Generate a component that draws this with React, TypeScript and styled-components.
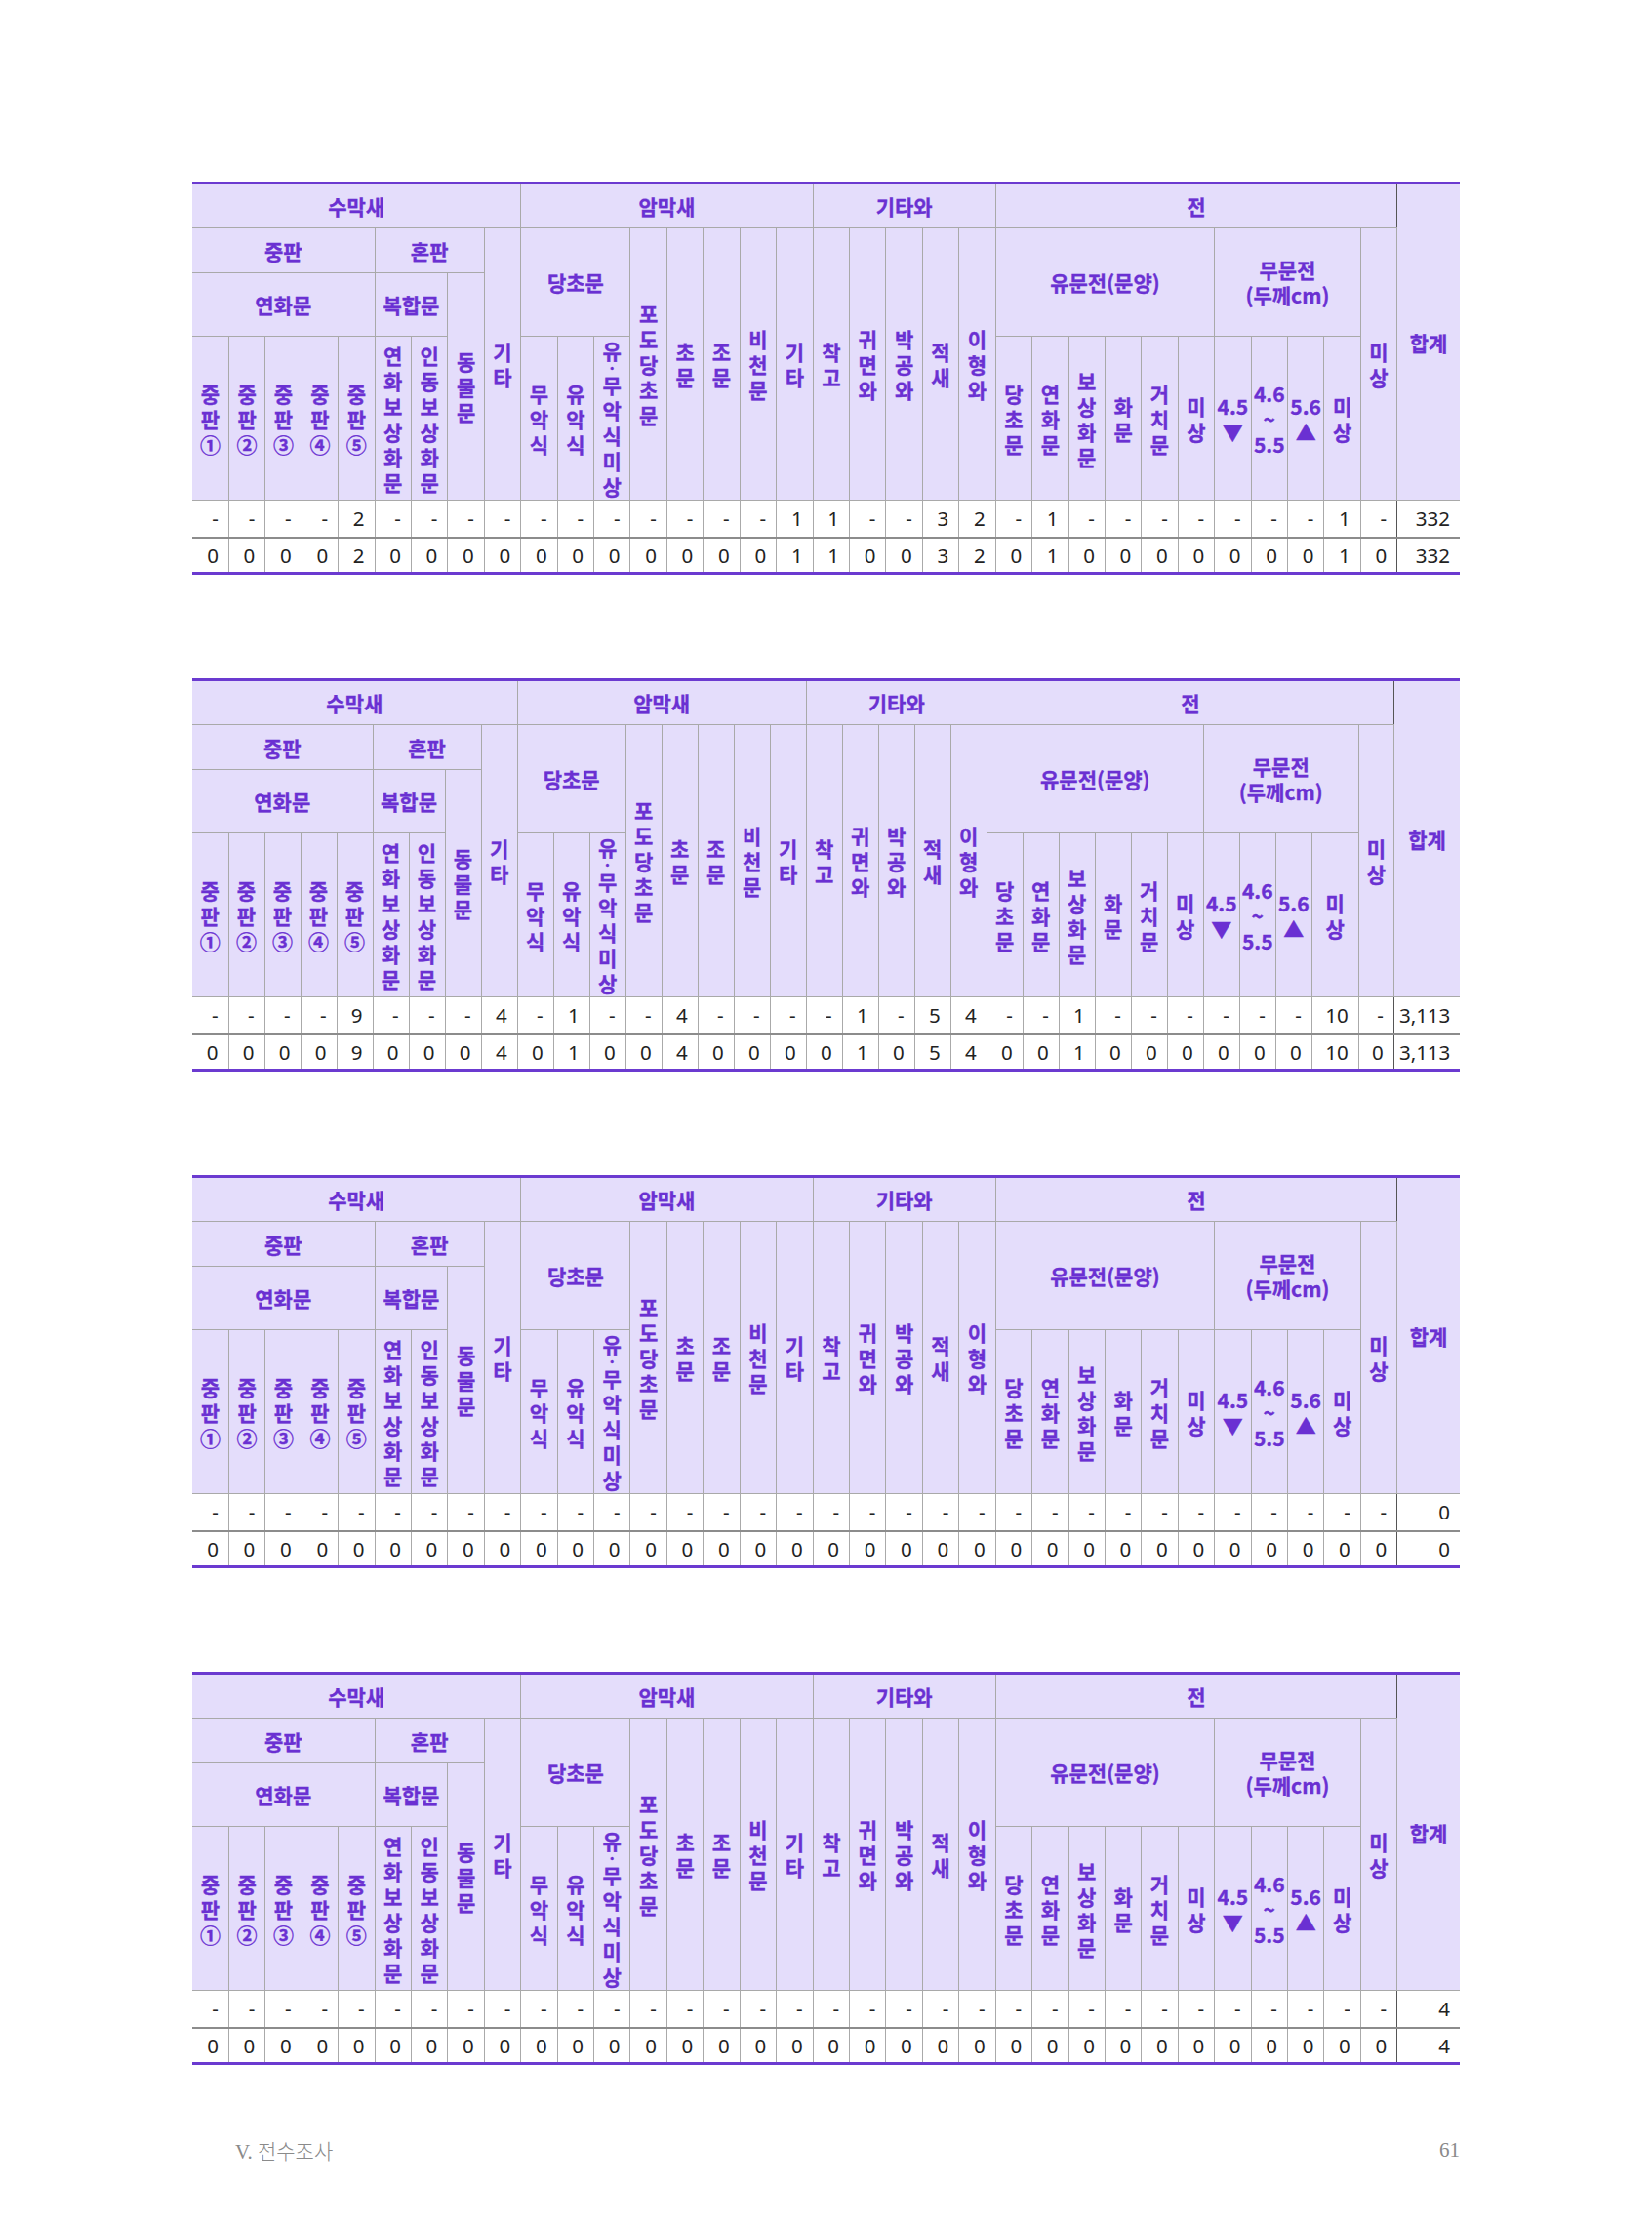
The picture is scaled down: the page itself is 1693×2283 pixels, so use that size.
import React from 'react';
import styled, { createGlobalStyle, css } from 'styled-components';

const GlobalStyle = createGlobalStyle`
  html, body { margin: 0; padding: 0; background: #ffffff; }
  #root { width: 1693px; }
`;

const Page = styled.div`
  width: 1693px;
  height: 2283px;
  box-sizing: border-box;
  padding: 186px 197px 0 197px;
  display: flex;
  flex-direction: column;
`;

const TableStack = styled.div`
  display: flex;
  flex-direction: column;
  gap: 106px;
`;

const Table = styled.table`
  border-collapse: collapse;
  table-layout: fixed;
  width: 1299px;
  border-top: 3px solid #6b3ad0;
  border-bottom: 3px solid #6b3ad0;
  border-left: hidden;
  border-right: hidden;
`;

const Col = styled.col<{ $w: number }>`
  width: ${(p) => p.$w}px;
`;

const HeadRow = styled.tr<{ $h: number }>`
  height: ${(p) => p.$h}px;
`;

const Th = styled.th<{ $edge?: boolean }>`
  background: #e4ddfb;
  color: #6a30d2;
  font-family: "Noto Sans CJK KR", "Noto Sans", sans-serif;
  font-weight: 700;
  font-size: 21px;
  line-height: 26px;
  -webkit-text-stroke: 0.35px #6a30d2;
  text-align: center;
  vertical-align: middle;
  padding: 0;
  border: 1px solid #a9a9a9;
  white-space: nowrap;
  ${(p) =>
    p.$edge &&
    css`
      border-right-color: #555555;
    `}
`;

const DataRow = styled.tr<{ $h: number; $sep?: boolean }>`
  height: ${(p) => p.$h}px;
  ${(p) =>
    p.$sep &&
    css`
      & > td {
        border-bottom: 2px solid #8c8c8c;
      }
    `}
`;

const Td = styled.td<{ $edge?: boolean }>`
  font-family: "Noto Sans", "Noto Sans CJK KR", sans-serif;
  font-size: 20.5px;
  color: #222222;
  text-align: right;
  vertical-align: middle;
  padding: 0 10px 0 0;
  border: 1px solid #aaaaaa;
  white-space: nowrap;
  ${(p) =>
    p.$edge &&
    css`
      border-right-color: #555555;
    `}
`;

const Stack = styled.span`
  display: inline-flex;
  flex-direction: column;
  align-items: center;
`;

const Ln = styled.span<{ $small?: boolean }>`
  display: block;
  height: ${(p) => (p.$small ? 9 : 26)}px;
  line-height: ${(p) => (p.$small ? 9 : 26)}px;
  ${(p) =>
    p.$small &&
    css`
      font-size: 16px;
    `}
`;

const Footer = styled.footer`
  margin-top: 72px;
  padding-left: 44px;
  display: flex;
  justify-content: space-between;
  align-items: center;
  font-family: "Liberation Serif", "Noto Sans CJK KR", serif;
  font-weight: 300;
  font-size: 21px;
  color: #8a8a8a;
`;

const V: React.FC<{ lines: string[] }> = ({ lines }) => (
  <Stack>
    {lines.map((l, i) => (
      <Ln key={i} $small={l === '·'}>
        {l}
      </Ln>
    ))}
  </Stack>
);

const Header: React.FC = () => (
  <thead>
    <HeadRow $h={46}>
      <Th colSpan={9}>수막새</Th>
      <Th colSpan={8}>암막새</Th>
      <Th colSpan={5}>기타와</Th>
      <Th colSpan={11} $edge>
        전
      </Th>
      <Th rowSpan={4}>합계</Th>
    </HeadRow>
    <HeadRow $h={46}>
      <Th colSpan={5}>중판</Th>
      <Th colSpan={3}>혼판</Th>
      <Th rowSpan={3}>
        <V lines={['기', '타']} />
      </Th>
      <Th colSpan={3} rowSpan={2}>
        당초문
      </Th>
      <Th rowSpan={3}>
        <V lines={['포', '도', '당', '초', '문']} />
      </Th>
      <Th rowSpan={3}>
        <V lines={['초', '문']} />
      </Th>
      <Th rowSpan={3}>
        <V lines={['조', '문']} />
      </Th>
      <Th rowSpan={3}>
        <V lines={['비', '천', '문']} />
      </Th>
      <Th rowSpan={3}>
        <V lines={['기', '타']} />
      </Th>
      <Th rowSpan={3}>
        <V lines={['착', '고']} />
      </Th>
      <Th rowSpan={3}>
        <V lines={['귀', '면', '와']} />
      </Th>
      <Th rowSpan={3}>
        <V lines={['박', '공', '와']} />
      </Th>
      <Th rowSpan={3}>
        <V lines={['적', '새']} />
      </Th>
      <Th rowSpan={3}>
        <V lines={['이', '형', '와']} />
      </Th>
      <Th colSpan={6} rowSpan={2}>
        유문전(문양)
      </Th>
      <Th colSpan={4} rowSpan={2}>
        <V lines={['무문전', '(두께cm)']} />
      </Th>
      <Th rowSpan={3} $edge>
        <V lines={['미', '상']} />
      </Th>
    </HeadRow>
    <HeadRow $h={65}>
      <Th colSpan={5}>연화문</Th>
      <Th colSpan={2}>복합문</Th>
      <Th rowSpan={2}>
        <V lines={['동', '물', '문']} />
      </Th>
    </HeadRow>
    <HeadRow $h={168}>
      <Th>
        <V lines={['중', '판', '①']} />
      </Th>
      <Th>
        <V lines={['중', '판', '②']} />
      </Th>
      <Th>
        <V lines={['중', '판', '③']} />
      </Th>
      <Th>
        <V lines={['중', '판', '④']} />
      </Th>
      <Th>
        <V lines={['중', '판', '⑤']} />
      </Th>
      <Th>
        <V lines={['연', '화', '보', '상', '화', '문']} />
      </Th>
      <Th>
        <V lines={['인', '동', '보', '상', '화', '문']} />
      </Th>
      <Th>
        <V lines={['무', '악', '식']} />
      </Th>
      <Th>
        <V lines={['유', '악', '식']} />
      </Th>
      <Th>
        <V lines={['유', '·', '무', '악', '식', '미', '상']} />
      </Th>
      <Th>
        <V lines={['당', '초', '문']} />
      </Th>
      <Th>
        <V lines={['연', '화', '문']} />
      </Th>
      <Th>
        <V lines={['보', '상', '화', '문']} />
      </Th>
      <Th>
        <V lines={['화', '문']} />
      </Th>
      <Th>
        <V lines={['거', '치', '문']} />
      </Th>
      <Th>
        <V lines={['미', '상']} />
      </Th>
      <Th>
        <V lines={['4.5', '▼']} />
      </Th>
      <Th>
        <V lines={['4.6', '~', '5.5']} />
      </Th>
      <Th>
        <V lines={['5.6', '▲']} />
      </Th>
      <Th>
        <V lines={['미', '상']} />
      </Th>
    </HeadRow>
  </thead>
);

type Cell = number | null;

interface TableData {
  widths: number[];
  values: Cell[];
  total: string;
}

const EMPTY: Cell[] = Array.from({ length: 33 }, () => null);

const withValues = (entries: Record<number, number>): Cell[] =>
  EMPTY.map((_, i) => (entries[i + 1] !== undefined ? entries[i + 1] : null));

const stdWidths = [...Array.from({ length: 33 }, () => 37.42), 64];
const wideWidths = [
  ...Array.from({ length: 28 }, () => 37),
  37,
  37,
  37,
  48,
  36,
  68,
];

const tables: TableData[] = [
  {
    widths: stdWidths,
    values: withValues({ 5: 2, 17: 1, 18: 1, 21: 3, 22: 2, 24: 1, 32: 1 }),
    total: '332',
  },
  {
    widths: wideWidths,
    values: withValues({ 5: 9, 9: 4, 11: 1, 14: 4, 19: 1, 21: 5, 22: 4, 25: 1, 32: 10 }),
    total: '3,113',
  },
  {
    widths: stdWidths,
    values: EMPTY,
    total: '0',
  },
  {
    widths: stdWidths,
    values: EMPTY,
    total: '4',
  },
];

const DataTable: React.FC<{ data: TableData }> = ({ data }) => (
  <Table>
    <colgroup>
      {data.widths.map((w, i) => (
        <Col key={i} $w={w} />
      ))}
    </colgroup>
    <Header />
    <tbody>
      <DataRow $h={38} $sep>
        {data.values.map((v, i) => (
          <Td key={i} $edge={i === 32}>
            {v === null ? '-' : v}
          </Td>
        ))}
        <Td>{data.total}</Td>
      </DataRow>
      <DataRow $h={37}>
        {data.values.map((v, i) => (
          <Td key={i} $edge={i === 32}>
            {v === null ? 0 : v}
          </Td>
        ))}
        <Td>{data.total}</Td>
      </DataRow>
    </tbody>
  </Table>
);

export default function App() {
  return (
    <>
      <GlobalStyle />
      <Page>
        <TableStack>
          {tables.map((t, i) => (
            <DataTable key={i} data={t} />
          ))}
        </TableStack>
        <Footer>
          <span>V. 전수조사</span>
          <span>61</span>
        </Footer>
      </Page>
    </>
  );
}
